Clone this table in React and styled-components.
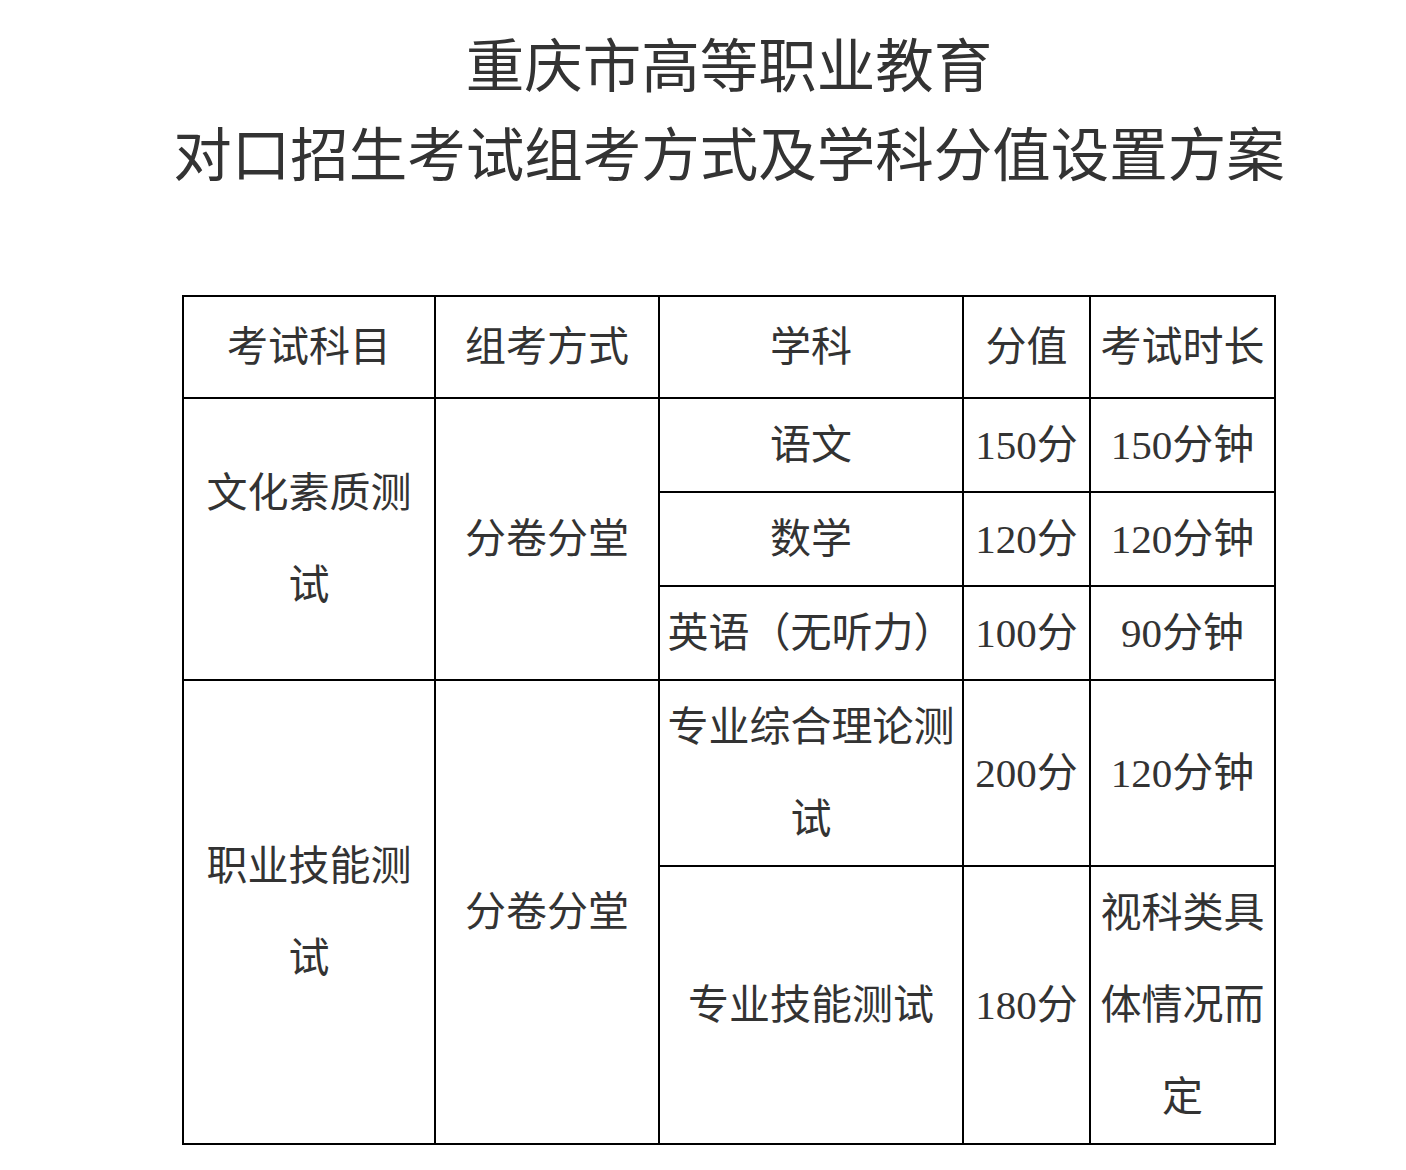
import React from 'react';
import styled, { createGlobalStyle } from 'styled-components';

const GlobalStyle = createGlobalStyle`
  body {
    margin: 0;
    background: #ffffff;
    color: #333333;
    font-family: "Noto Sans CJK SC", sans-serif;
  }
`;

const Page = styled.div`
  width: 1354px;
  padding: 17px 0 40px 52px;
  text-align: center;
`;

const Title = styled.h1`
  margin: 0;
  font-family: "Noto Sans CJK SC", sans-serif;
  font-size: 58.5px;
  font-weight: 400;
  line-height: 89px;
  color: #333333;
`;

const Table = styled.table`
  margin: 100px auto 0;
  width: 1092px;
  border-collapse: collapse;
  table-layout: fixed;
`;

const Th = styled.th`
  height: 100px;
  padding: 0 4px;
  border: 2px solid #000000;
  font-family: "Liberation Serif", "Noto Sans CJK SC", serif;
  font-size: 41px;
  font-weight: 400;
  line-height: 92px;
  color: #333333;
  text-align: center;
  vertical-align: middle;
`;

const Td = styled.td`
  padding: 0 4px;
  border: 2px solid #000000;
  font-family: "Liberation Serif", "Noto Sans CJK SC", serif;
  font-size: 41px;
  line-height: 92px;
  color: #333333;
  text-align: center;
  vertical-align: middle;
  word-break: break-all;
`;

const columns = [252, 224, 304, 127, 185];

const headers = ['考试科目', '组考方式', '学科', '分值', '考试时长'];

const App = () => {
  return (
    <>
      <GlobalStyle />
      <Page>
        <Title>
          重庆市高等职业教育
          <br />
          对口招生考试组考方式及学科分值设置方案
        </Title>
        <Table>
          <colgroup>
            {columns.map((w, i) => (
              <col key={i} style={{ width: w }} />
            ))}
          </colgroup>
          <thead>
            <tr>
              {headers.map((h) => (
                <Th key={h}>{h}</Th>
              ))}
            </tr>
          </thead>
          <tbody>
            <tr>
              <Td rowSpan={3}>文化素质测试</Td>
              <Td rowSpan={3}>分卷分堂</Td>
              <Td>语文</Td>
              <Td>150分</Td>
              <Td>150分钟</Td>
            </tr>
            <tr>
              <Td>数学</Td>
              <Td>120分</Td>
              <Td>120分钟</Td>
            </tr>
            <tr>
              <Td>英语（无听力）</Td>
              <Td>100分</Td>
              <Td>90分钟</Td>
            </tr>
            <tr>
              <Td rowSpan={2}>职业技能测试</Td>
              <Td rowSpan={2}>分卷分堂</Td>
              <Td>专业综合理论测试</Td>
              <Td>200分</Td>
              <Td>120分钟</Td>
            </tr>
            <tr>
              <Td>专业技能测试</Td>
              <Td>180分</Td>
              <Td>视科类具体情况而定</Td>
            </tr>
          </tbody>
        </Table>
      </Page>
    </>
  );
};

export default App;
